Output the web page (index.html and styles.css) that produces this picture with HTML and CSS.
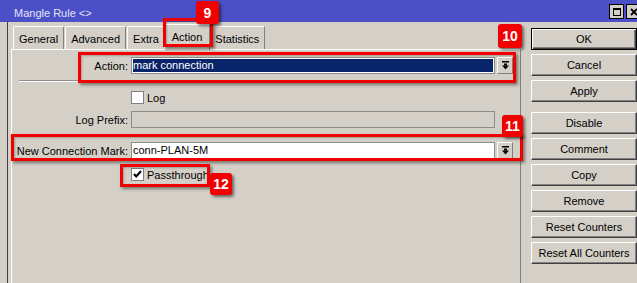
FILE: index.html
```html
<!DOCTYPE html>
<html>
<head>
<meta charset="utf-8">
<link rel="stylesheet" href="styles.css">
</head>
<body>
<div class="win">
  <div class="titlebar">
    <span class="title">Mangle Rule &lt;&gt;</span>
    <div class="tb-btns">
      <span class="tb-btn"><svg width="12" height="12" viewBox="0 0 12 12"><rect x="2.5" y="2.5" width="7" height="7" fill="none" stroke="#000"/><rect x="2" y="2" width="8" height="2" fill="#000"/></svg></span>
      <span class="tb-btn"><svg width="12" height="12" viewBox="0 0 12 12"><path d="M3 3 L9 9 M9 3 L3 9" stroke="#000" stroke-width="1.8"/></svg></span>
    </div>
  </div>
  <div class="frame">
    <div class="main">
      <div class="tabs">
        <div class="tab">General</div>
        <div class="tab">Advanced</div>
        <div class="tab">Extra</div>
        <div class="tab active">Action</div>
        <div class="tab">Statistics</div>
      </div>
      <div class="panel">
        <div class="row r-action">
          <span class="lbl">Action:</span>
          <div class="field sel"><span class="hilite">mark connection</span></div>
          <span class="dd"><svg width="7" height="9" viewBox="0 0 7 9"><rect x="0" y="0" width="7" height="1.5" fill="#000"/><rect x="2" y="2.5" width="3" height="2" fill="#000"/><path d="M0 4.5 H7 L3.5 8.5 Z" fill="#000"/></svg></span>
        </div>
        <div class="sep"></div>
        <div class="row r-log">
          <span class="lbl"></span>
          <span class="cb"></span>
          <span class="cbtext">Log</span>
        </div>
        <div class="row r-prefix">
          <span class="lbl">Log Prefix:</span>
          <div class="field disabled"></div>
        </div>
        <div class="row r-ncm">
          <span class="lbl">New Connection Mark:</span>
          <div class="field">conn-PLAN-5M</div>
          <span class="dd"><svg width="7" height="9" viewBox="0 0 7 9"><rect x="0" y="0" width="7" height="1.5" fill="#000"/><rect x="2" y="2.5" width="3" height="2" fill="#000"/><path d="M0 4.5 H7 L3.5 8.5 Z" fill="#000"/></svg></span>
        </div>
        <div class="row r-pass">
          <span class="lbl"></span>
          <span class="cb"><svg width="11" height="11" viewBox="0 0 11 11"><path d="M2 5 L4.2 7.5 L9 2" fill="none" stroke="#000" stroke-width="2"/></svg></span>
          <span class="cbtext">Passthrough</span>
        </div>
      </div>
    </div>
    <div class="side">
      <div class="btn default">OK</div>
      <div class="btn">Cancel</div>
      <div class="btn">Apply</div>
      <div class="btn group">Disable</div>
      <div class="btn">Comment</div>
      <div class="btn">Copy</div>
      <div class="btn">Remove</div>
      <div class="btn">Reset Counters</div>
      <div class="btn">Reset All Counters</div>
    </div>
  </div>

  <div class="hl hl-tab"></div>
  <div class="hl hl-action"></div>
  <div class="hl hl-ncm"></div>
  <div class="hl hl-pass"></div>

  <div class="badge b9">9</div>
  <div class="badge b10">10</div>
  <div class="badge b11">11</div>
  <div class="badge b12">12</div>
</div>
</body>
</html>
```

FILE: styles.css
```css
* { box-sizing: border-box; }
html, body { margin: 0; padding: 0; }
body {
  width: 637px;
  height: 283px;
  overflow: hidden;
  background: #d4d0c8;
  font-family: "Liberation Sans", Arial, sans-serif;
  font-size: 11px;
  color: #000;
}
.win {
  position: relative;
  width: 637px;
  height: 283px;
  overflow: hidden;
}
.titlebar {
  height: 22px;
  background: #4b50c6;
  display: flex;
  align-items: flex-start;
  padding-left: 14px;
  overflow: hidden;
}
.title {
  color: #e4e4f6;
  line-height: 18px;
  padding-top: 4px;
}
.tb-btns {
  margin-left: auto;
  margin-right: -4px;
  margin-top: 4px;
  display: flex;
  gap: 2px;
}
.tb-btn {
  width: 15px;
  height: 15px;
  background: #d4d0c8;
  border: 1px solid #000;
  display: flex;
  align-items: center;
  justify-content: center;
}
.frame {
  display: flex;
  height: 261px;
  margin-left: 7px;
  border-left: 1px solid #404040;
}
.main {
  width: 513px;
  padding-left: 3px;
  display: flex;
  flex-direction: column;
}
.tabs {
  display: flex;
  align-items: flex-start;
  height: 27px;
  padding-top: 4px;
  padding-left: 2px;
  gap: 1px;
}
.tab {
  height: 23px;
  padding: 2px 5px 0;
  line-height: 20px;
  border-top: 1px solid #fff;
  border-left: 1px solid #fff;
  border-right: 1px solid #808080;
  border-radius: 2px 2px 0 0;
  background: #d4d0c8;
  white-space: nowrap;
}
.tab.active {
  position: relative;
  z-index: 1;
  height: 26px;
  margin: -2px -2px 0;
  padding: 2px 7px 0;
}
.panel {
  flex: 1;
  border-top: 1px solid #fff;
  border-left: 1px solid #fff;
  border-right: 1px solid #808080;
  padding-top: 7px;
}
.row {
  display: flex;
  align-items: center;
  height: 17px;
}
.lbl {
  width: 116px;
  flex: none;
  text-align: right;
  white-space: nowrap;
}
.field {
  width: 364px;
  height: 17px;
  margin-left: 3px;
  border: 1px solid #8c8c8c;
  background: #fff;
  padding: 0 1px;
  line-height: 15px;
  white-space: nowrap;
}
.field.sel { padding: 1px; }
.hilite {
  display: block;
  height: 13px;
  background: #0a246a;
  color: #fff;
  line-height: 13px;
}
.field.disabled { background: #d4d0c8; }
.dd {
  width: 16px;
  height: 17px;
  margin-left: 2px;
  background: #d4d0c8;
  border: 1px solid;
  border-color: #fff #808080 #808080 #fff;
  display: flex;
  align-items: center;
  justify-content: center;
}
.sep {
  margin: 6px 7px 0;
  height: 2px;
  border-top: 1px solid #8c8c8c;
  border-bottom: 1px solid #fff;
}
.r-log { margin-top: 9px; height: 13px; }
.r-prefix { margin-top: 7px; }
.r-ncm { margin-top: 14px; }
.r-pass { margin-top: 9px; height: 13px; }
.cb {
  width: 13px;
  height: 13px;
  margin-left: 3px;
  background: #fff;
  border: 1px solid #808080;
  display: flex;
  align-items: center;
  justify-content: center;
}
.cbtext { margin-left: 3px; }
.side {
  padding: 6px 0 0 10px;
  display: flex;
  flex-direction: column;
  gap: 4px;
}
.btn {
  width: 106px;
  height: 22px;
  line-height: 20px;
  text-align: center;
  border: 1px solid;
  border-color: #fff #404040 #404040 #fff;
  box-shadow: inset -1px -1px #808080;
  white-space: nowrap;
}
.btn.default {
  border-color: #000;
  box-shadow: inset 1px 1px #fff, inset -1px -1px #404040, inset -2px -2px #808080;
}
.btn.group { margin-top: 6px; }

.hl {
  position: absolute;
  border: 3px solid #f20000;
  box-shadow: 2px 2px 3px rgba(0,0,0,0.45), inset 1px 1px 2px rgba(0,0,0,0.25);
  z-index: 5;
}
.hl-tab { left: 163px; top: 18px; width: 50px; height: 29px; }
.hl-action { left: 78px; top: 52px; width: 438px; height: 31px; }
.hl-ncm { left: 11px; top: 134px; width: 512px; height: 27px; }
.hl-pass { left: 120px; top: 164px; width: 90px; height: 23px; }

.badge {
  position: absolute;
  z-index: 6;
  background: #f20000;
  color: #fff;
  border-radius: 3px;
  font-family: "Liberation Sans", Arial, sans-serif;
  font-weight: bold;
  font-size: 14px;
  display: flex;
  align-items: center;
  justify-content: center;
  box-shadow: 2px 2px 3px rgba(0,0,0,0.5);
}
.b9 { left: 196px; top: 1px; width: 23px; height: 23px; }
.b10 { left: 498px; top: 24px; width: 24px; height: 24px; }
.b11 { left: 502px; top: 115px; width: 21px; height: 22px; }
.b12 { left: 210px; top: 173px; width: 22px; height: 22px; }
```
